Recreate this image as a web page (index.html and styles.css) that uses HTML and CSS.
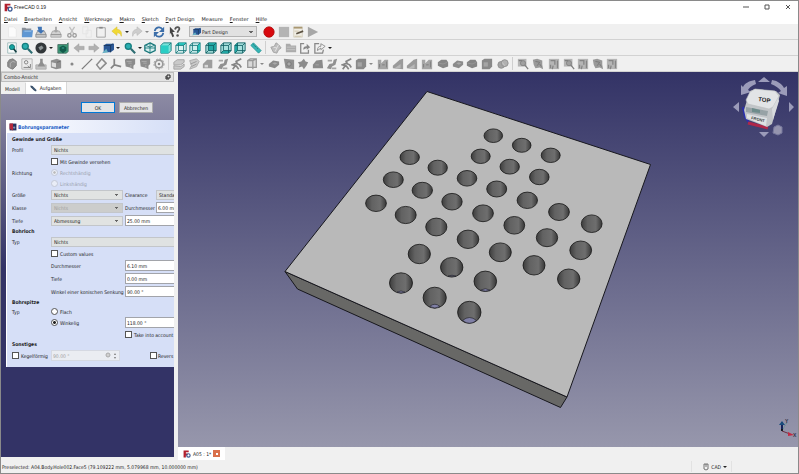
FILE: index.html
```
<!DOCTYPE html>
<html lang="de">
<head>
<meta charset="utf-8">
<title>FreeCAD 0.19</title>
<link rel="stylesheet" href="styles.css">
</head>
<body>
<svg class="defs" aria-hidden="true">
  <defs>
    <symbol id="logo" viewBox="0 0 14 14"><path d="M1 1h9v3H5v2h3v3H5v4H1z" fill="#b3202e"/><circle cx="9.500" cy="9.500" r="3" fill="none" stroke="#3d5a94" stroke-width="2"/></symbol>
    <symbol id="new" viewBox="0 0 14 14"><path d="M3 1h6l3 3v9H3z" fill="#fbfbfb" stroke="#e8e8e8"/></symbol>
    <symbol id="open" viewBox="0 0 14 14"><path d="M1 2h4l1 1h6v9H1z" fill="#8a9099"/><path d="M2 5h12l-1 8H1z" fill="#5f97d3"/><path d="M4 6h8" stroke="#a9cbee"/></symbol>
    <symbol id="save" viewBox="0 0 14 14"><path d="M3 6h8l2 4v3H1v-3z" fill="#c9cbcc" stroke="#8b8e91"/><path d="M1 10h12" stroke="#8b8e91"/><path d="M3 1h5v4h3L7 9 2 5h2z" fill="#3f74b5"/></symbol>
    <symbol id="tray" viewBox="0 0 14 14"><path d="M3 6h8l2 4v3H1v-3z" fill="#d0d0d0" stroke="#a5a5a5"/><path d="M1 10h12" stroke="#8b8b8b"/><path d="M6 1h2v4h2L7 8 4 5h2z" fill="#a5a5a5"/></symbol>
    <symbol id="cut" viewBox="0 0 14 14"><path d="M4 1l5 8M10 1L5 9" stroke="#c0c0c0" stroke-width="1.500"/><circle cx="4" cy="11" r="2" fill="none" stroke="#999" stroke-width="1.500"/><circle cx="10" cy="11" r="2" fill="none" stroke="#999" stroke-width="1.500"/></symbol>
    <symbol id="copy" viewBox="0 0 14 14"><path d="M2 1h6v8H2zM6 5h6v8H6z" fill="#f1f1f1" stroke="#e4e4e4"/></symbol>
    <symbol id="paste" viewBox="0 0 14 14"><path d="M2 2h10v11H2z" fill="#f0f0f0" stroke="#9c9c9c"/><path d="M5 1h4v2H5z" fill="#888"/></symbol>
    <symbol id="undo" viewBox="0 0 14 14"><path d="M7 1v3c4 0 6 3 5 8-1-3-2-4-5-4v3L1 6z" fill="#f1d934" stroke="#dcc23a" stroke-width=".7"/></symbol>
    <symbol id="redo" viewBox="0 0 14 14"><path d="M7 1v3c-4 0-6 3-5 8 1-3 2-4 5-4v3l6-5z" fill="#cdcdcd" stroke="#b9b9b9" stroke-width=".7"/></symbol>
    <symbol id="refresh" viewBox="0 0 14 14"><path d="M2 6c1-5 7-6 9-2M12 8c-1 5-7 6-9 2" fill="none" stroke="#3c6ea9" stroke-width="2"/><path d="M13 1v6H7zM1 13V7h6z" fill="#3c6ea9"/></symbol>
    <symbol id="help" viewBox="0 0 14 14"><path d="M1 1l6 6H4l2 5-2 1-2-5-1 2z" fill="#444"/><path d="M7 4c1-4 6-3 5 0-1 2-2 2-2 4" fill="none" stroke="#555" stroke-width="2"/><circle cx="10" cy="11" r="1.500" fill="#555"/></symbol>
    <symbol id="rec" viewBox="0 0 14 14"><circle cx="7" cy="7" r="6" fill="#d8090e" stroke="#b00a0c"/></symbol>
    <symbol id="stop" viewBox="0 0 14 14"><path d="M1 1h12v12H1z" fill="#b4b4b4"/></symbol>
    <symbol id="macro" viewBox="0 0 14 14"><path d="M2 1h10v12H2z" fill="#f0ede4" stroke="#d5cfc0"/><path d="M2 1h10v2H2z" fill="#a99872"/><path d="M5 9l8-3" stroke="#5a5142" stroke-width="2"/><path d="M3 6h5M3 12h8" stroke="#ccc2a8"/></symbol>
    <symbol id="play" viewBox="0 0 14 14"><path d="M1 1l12 6-12 6z" fill="#a7a7a7"/></symbol>
    <symbol id="fit" viewBox="0 0 14 14"><path d="M2 1h10v12H2z" fill="#f8fbfb" stroke="#9ab8b8"/><circle cx="7" cy="6" r="3" fill="#14a3a0" stroke="#126d6d"/><path d="M9 8l3 4" stroke="#143f43" stroke-width="2"/></symbol>
    <symbol id="zoom" viewBox="0 0 14 14"><circle cx="5" cy="5" r="3.500" fill="#2aaeb0" stroke="#157c7e" stroke-width="1.500"/><path d="M8 8l5 5" stroke="#2d6d72" stroke-width="2.500"/></symbol>
    <symbol id="style" viewBox="0 0 14 14"><circle cx="7" cy="7" r="6.500" fill="#32373a"/><path d="M4 6l4-2 2 3-4 3z" fill="#8d9597"/></symbol>
    <symbol id="bbox" viewBox="0 0 14 14"><path d="M1 3h10l2-2v10l-2 2H1z" fill="#3a9a78" stroke="#4a6d64"/><path d="M3 6l4-2 4 2v4l-4 3-4-3z" fill="#125b4b"/><path d="M5 7l2-1 2 1-2 1z" fill="#33a08d"/></symbol>
    <symbol id="back" viewBox="0 0 14 14"><path d="M1 7l6-5v3h6v4H7v3z" fill="#b0b0b0" stroke="#9b9b9b" stroke-width=".5"/></symbol>
    <symbol id="fwd" viewBox="0 0 14 14"><path d="M13 7L7 2v3H1v4h6v3z" fill="#b0b0b0" stroke="#9b9b9b" stroke-width=".5"/></symbol>
    <symbol id="link" viewBox="0 0 14 14"><path d="M2 4l3-2h9v7l-4 3H2z" fill="#2a5796"/><path d="M2 4h8v8M10 4l3-2" fill="none" stroke="#173558"/><path d="M0 13l5-5 2 4z" fill="#66b2c4"/></symbol>
    <symbol id="axo" viewBox="0 0 14 14"><path d="M7 1l6 3v6l-6 3-6-3V4z" fill="#d9f1f0" stroke="#19777a" stroke-width="1.500"/><path d="M7 1v12M1 7h12M2 4l5 2 5-2" stroke="#19777a" fill="none"/></symbol>
    <symbol id="c-front" viewBox="0 0 14 14"><path d="M1 4l3-3h9v9l-3 3H1z" fill="#79e3da" stroke="#16777a"/><path d="M1 4h9v9H1z" fill="#2acdc4"/><path d="M10 4l3-3" stroke="#16777a"/></symbol>
    <symbol id="c-top" viewBox="0 0 14 14"><path d="M1 4l3-3h9v9l-3 3H1z" fill="#dff2f2" stroke="#16777a"/><path d="M1 4l3-3h9l-3 3z" fill="#29c5be"/><path d="M1 4h9v9M10 4l3-3M4 1v9h9M4 10l-3 3" fill="none" stroke="#16777a"/></symbol>
    <symbol id="c-right" viewBox="0 0 14 14"><path d="M1 4l3-3h9v9l-3 3H1z" fill="#d0efee" stroke="#16777a"/><path d="M10 4l3-3v9l-3 3z" fill="#29c5be"/><path d="M1 4h9v9M10 4l3-3M4 1v9h9M4 10l-3 3" fill="none" stroke="#16777a"/></symbol>
    <symbol id="c-rear" viewBox="0 0 14 14"><path d="M1 4l3-3h9v9l-3 3H1z" fill="#a9dedc" stroke="#0e5f62"/><path d="M4 1h9v9H4z" fill="#22a8a5"/><path d="M1 4h9v9M10 4l3-3M4 1v9h9M4 10l-3 3" fill="none" stroke="#0e5f62"/></symbol>
    <symbol id="c-bottom" viewBox="0 0 14 14"><path d="M1 4l3-3h9v9l-3 3H1z" fill="#a9e2df" stroke="#0e5f62"/><path d="M1 13l3-3h9l-3 3z" fill="#22a8a5"/><path d="M1 4h9v9M10 4l3-3M4 1v9h9M4 10l-3 3" fill="none" stroke="#0e5f62"/></symbol>
    <symbol id="c-left" viewBox="0 0 14 14"><path d="M1 4l3-3h9v9l-3 3H1z" fill="#a9e2df" stroke="#0e5f62"/><path d="M1 4l3-3v9l-3 3z" fill="#22a8a5"/><path d="M1 4h9v9M10 4l3-3M4 1v9h9M4 10l-3 3" fill="none" stroke="#0e5f62"/></symbol>
    <symbol id="ruler" viewBox="0 0 14 14"><path d="M1 4l3-3 9 9-3 3z" fill="#35b5b5" stroke="#2a9494"/><path d="M4 3l1 1M6 5l1 1M8 7l1 1" stroke="#0d5c5c"/></symbol>
    <symbol id="part" viewBox="0 0 14 14"><path d="M1 6l4-1 2-4 3 2 3 4-3 2-2 4-4-1z" fill="#bebebe" stroke="#a0a0a0"/><path d="M4 6l4 1 2-4M8 7l-2 4" fill="none" stroke="#e6e6e6"/></symbol>
    <symbol id="folder" viewBox="0 0 14 14"><path d="M1 2h5l1 2h6v8H1z" fill="#ababab"/><path d="M2 6h10M2 9h10" stroke="#c8c8c8"/></symbol>
    <symbol id="export" viewBox="0 0 14 14"><path d="M6 2H2v11h9V9" fill="none" stroke="#888" stroke-width="1.500"/><path d="M5 9c0-3 1-4 4-4V2l4 4-4 3V7z" fill="#888"/></symbol>
    <symbol id="export2" viewBox="0 0 14 14"><path d="M6 2H1v11h9l1-4" fill="none" stroke="#888" stroke-width="1.500"/><path d="M4 10c0-3 1-5 4-5V2l5 3-5 4V7z" fill="none" stroke="#888"/></symbol>
    <symbol id="body" viewBox="0 0 14 14"><path d="M2 5l2-3 4-1 4 3v5l-4 4-3-1-3-2z" fill="#8c8c8c" stroke="#787878"/><path d="M5 6l3-2 3 1M5 6v5" stroke="#b8b8b8" fill="none"/></symbol>
    <symbol id="sketch" viewBox="0 0 14 14"><path d="M1 1h12v12H1z" fill="#ececec" stroke="#b0b0b0"/><circle cx="6" cy="5" r="2" fill="none" stroke="#777"/><path d="M3 11h8V7M8 9l3 3" fill="none" stroke="#777"/></symbol>
    <symbol id="edit" viewBox="0 0 14 14"><path d="M1 8h12v5H1z" fill="#c2c2c2" stroke="#aaa"/><path d="M6 1h3v4l3 5H3l3-5z" fill="#8f8f8f"/></symbol>
    <symbol id="map" viewBox="0 0 14 14"><path d="M1 3l7-2 5 2v9l-6 1-6-2z" fill="#8f8f8f"/><path d="M2 5l5 1v5l-5-1z" fill="#dedede"/><path d="M8 5l4-1" stroke="#666"/></symbol>
    <symbol id="point" viewBox="0 0 14 14"><circle cx="7" cy="7" r="1.800" fill="#888"/></symbol>
    <symbol id="line" viewBox="0 0 14 14"><path d="M1 13L13 1" stroke="#7c7c7c" stroke-width="1.500"/></symbol>
    <symbol id="plane" viewBox="0 0 14 14"><path d="M8 1l5 5-7 7-4-5z" fill="none" stroke="#8c8c8c" stroke-width="1.800"/></symbol>
    <symbol id="lcs" viewBox="0 0 14 14"><path d="M5 1v7l8 2M5 8l-4 4" fill="none" stroke="#858585" stroke-width="2"/></symbol>
    <symbol id="binder" viewBox="0 0 14 14"><path d="M1 2l2-1h10v6l-2 2v4l-4-2-5-1z" fill="#8c8c8c"/><path d="M3 4h6M5 6h4M8 8v3" stroke="#adadad"/></symbol>
    <symbol id="gear" viewBox="0 0 14 14"><circle cx="7" cy="7" r="4.500" fill="none" stroke="#999" stroke-width="2"/><circle cx="7" cy="7" r="6" fill="none" stroke="#999" stroke-dasharray="2 2"/><circle cx="7" cy="7" r="1.500" fill="#888"/></symbol>
    <symbol id="pad" viewBox="0 0 14 14"><path d="M1 5l4-3h8v3L9 8H1zM1 9l8 1 4-3v3l-4 3H1z" fill="#c9c9c9" stroke="#a0a0a0"/></symbol>
    <symbol id="revolve" viewBox="0 0 14 14"><path d="M2 3l8-2 3 3-3 6-8 3 2-4z" fill="#cacaca" stroke="#a9a9a9"/><path d="M3 7l7-3M4 10l6-3" stroke="#959595"/></symbol>
    <symbol id="loft" viewBox="0 0 14 14"><path d="M1 7l5-5h6v10H1z" fill="#9d9d9d"/><path d="M3 8h4v3H3z" fill="#d8d8d8"/></symbol>
    <symbol id="loft2" viewBox="0 0 14 14"><path d="M1 8l4-5 7-1 1 10H1z" fill="#8a8a8a"/><path d="M4 8h4" stroke="#aaa"/></symbol>
    <symbol id="sweep" viewBox="0 0 14 14"><path d="M1 12l3-5 4-1 1-4 4-1-2 7-4 2-1 3z" fill="#909090"/><path d="M2 3h5M7 12h5" stroke="#a5a5a5" stroke-width="2"/></symbol>
    <symbol id="helix" viewBox="0 0 14 14"><path d="M2 13l3-4-3-1 5-2-1-2 6-3M6 6l4 2 2 3M6 9l3 4" fill="none" stroke="#858585" stroke-width="2"/></symbol>
    <symbol id="prim" viewBox="0 0 14 14"><path d="M2 3l3-2h7v10H2zM2 3h6v10M8 3l4-2" fill="#d9d9d9" stroke="#989898" stroke-width="1.500"/></symbol>
    <symbol id="pocket" viewBox="0 0 14 14"><path d="M1 7l5-4 7 1v4l-5 4-7-2z" fill="#8b8b8b"/><path d="M5 6l3-1 3 1-3 2z" fill="#a9a9a9"/></symbol>
    <symbol id="hole" viewBox="0 0 14 14"><path d="M1 1l12 1v11L3 12z" fill="#909090"/><circle cx="7" cy="7" r="2.500" fill="#aaa" stroke="#757575"/></symbol>
    <symbol id="groove" viewBox="0 0 14 14"><path d="M1 5l4-1 3-3 2 3 3 1-2 4-3 4-2-3-4 1 1-3z" fill="#8c8c8c"/></symbol>
    <symbol id="box" viewBox="0 0 14 14"><path d="M1 3l3-2h9v9l-3 3H1z" fill="#898989"/><path d="M3 5h5v5H3z" fill="#a5a5a5"/></symbol>
    <symbol id="wedge" viewBox="0 0 14 14"><path d="M1 12V9l8-7 4-1v12z" fill="#9a9a9a"/><path d="M3 12l7-5v5z" fill="#b8b8b8"/></symbol>
    <symbol id="pattern" viewBox="0 0 14 14"><path d="M1 2h4v4l4-4h4v11H1z" fill="#a5a5a5"/><path d="M3 7v4M6 8h3M11 4v7" stroke="#7a7a7a"/></symbol>
    <symbol id="fillet" viewBox="0 0 14 14"><path d="M1 5l4-3 6 0 2 3v5l-6 2-6-3z" fill="#858585"/><path d="M2 6l5 1 5-2" stroke="#989898" fill="none"/></symbol>
    <symbol id="bool" viewBox="0 0 14 14"><circle cx="5" cy="8" r="4" fill="#a4a4a4" stroke="#8d8d8d"/><circle cx="9" cy="6" r="4" fill="#b0b0b0" stroke="#8d8d8d"/><path d="M6 5l3 4" stroke="#ccc"/></symbol>
    <symbol id="meas" viewBox="0 0 14 14"><path d="M1 1h10v9H1z" fill="#b5b5b5"/><circle cx="7" cy="6" r="3" fill="#a0a0a0" stroke="#838383"/><path d="M9 8l4 5M2 3h4" stroke="#808080" stroke-width="1.500"/></symbol>
    <symbol id="meas2" viewBox="0 0 14 14"><path d="M1 2l5-1 6 2v5l1 5-4-2-5 1-2-4z" fill="#999"/><path d="M4 4l5 1-3 4M9 7l2 3" stroke="#747474" fill="none"/></symbol>
    <symbol id="meas3" viewBox="0 0 14 14"><path d="M1 1h12v12H1z" fill="#b5b5b5"/><path d="M3 3h5v5M3 12V8M6 9l-1 4M11 3v9" stroke="#858585" fill="none" stroke-width="1.500"/></symbol>
    <symbol id="pencil" viewBox="0 0 14 14"><path d="M1 1l4 1 8 8-1 3-4-2-7-7z" fill="#31475f"/><path d="M4 3l8 8" stroke="#6d8bb0"/></symbol>
    <linearGradient id="bore"><stop offset="0" stop-color="#3d3d3d"/><stop offset=".3" stop-color="#626262"/><stop offset=".7" stop-color="#6e6e6e"/><stop offset="1" stop-color="#373737"/></linearGradient>
  </defs>
</svg>

<div class="window">
  <header class="titlebar">
    <svg class="icon"><use href="#logo"/></svg>
    <h1>FreeCAD 0.19</h1>
    <div class="winbtns">
      <button aria-label="Minimieren"><svg viewBox="0 0 6 6"><path d="M0 3h6"/></svg></button>
      <button aria-label="Maximieren"><svg viewBox="0 0 6 6"><path d="M1 1h4v4H1z"/></svg></button>
      <button aria-label="Schließen"><svg viewBox="0 0 6 6"><path d="M1 1l4 4M5 1L1 5"/></svg></button>
    </div>
  </header>
  <nav class="menubar">
    <button><u>D</u>atei</button><button><u>B</u>earbeiten</button><button><u>A</u>nsicht</button><button><u>W</u>erkzeuge</button><button><u>M</u>akro</button><button><u>S</u>ketch</button><button><u>P</u>art Design</button><button>Measure</button><button><u>F</u>enster</button><button><u>H</u>ilfe</button>
  </nav>

  <div class="toolbar">
    <div class="group n4"><button aria-label="Neu"><svg><use href="#new"/></svg></button><button aria-label="Öffnen"><svg><use href="#open"/></svg></button><button aria-label="Speichern"><svg><use href="#save"/></svg></button><button aria-label="Drucken"><svg><use href="#tray"/></svg></button></div>
    <div class="group n3"><button aria-label="Ausschneiden"><svg><use href="#cut"/></svg></button><button aria-label="Kopieren"><svg><use href="#copy"/></svg></button><button aria-label="Einfügen"><svg><use href="#paste"/></svg></button></div>
    <div class="group"><button aria-label="Rückgängig"><svg><use href="#undo"/></svg></button><button class="drop" aria-label="Rückgängig-Liste"></button><button aria-label="Wiederholen"><svg><use href="#redo"/></svg></button><button class="drop off" aria-label="Wiederholen-Liste"></button></div>
    <div class="group"><button aria-label="Aktualisieren"><svg><use href="#refresh"/></svg></button></div>
    <div class="group"><button aria-label="Direkthilfe"><svg><use href="#help"/></svg></button></div>
    <div class="workbench"><svg class="icon"><use href="#link"/></svg><select aria-label="Arbeitsbereich"><option>Part Design</option></select></div>
    <div class="group n4"><button aria-label="Aufzeichnen"><svg><use href="#rec"/></svg></button><button aria-label="Stopp"><svg><use href="#stop"/></svg></button><button aria-label="Makros"><svg><use href="#macro"/></svg></button><button aria-label="Ausführen"><svg><use href="#play"/></svg></button></div>
  </div>

  <div class="toolbar">
    <div class="group n3"><button aria-label="Alles einpassen"><svg><use href="#fit"/></svg></button><button aria-label="Auswahl einpassen"><svg><use href="#zoom"/></svg></button><button aria-label="Darstellung"><svg><use href="#style"/></svg></button></div><button class="drop joined" aria-label="Darstellungen"></button>
    <div class="group"><button aria-label="Begrenzungsrahmen"><svg><use href="#bbox"/></svg></button></div>
    <div class="group n3"><button aria-label="Zurück"><svg><use href="#back"/></svg></button><button aria-label="Vorwärts"><svg><use href="#fwd"/></svg></button><button aria-label="Verknüpfung"><svg><use href="#link"/></svg></button></div><button class="drop joined" aria-label="Verknüpfungen"></button>
    <div class="group"><button aria-label="Zoom"><svg><use href="#zoom"/></svg></button><button class="drop" aria-label="Zoomstufen"></button><button aria-label="Isometrisch"><svg><use href="#axo"/></svg></button></div>
    <div class="group n3"><button aria-label="Vorne"><svg><use href="#c-front"/></svg></button><button aria-label="Oben"><svg><use href="#c-top"/></svg></button><button aria-label="Rechts"><svg><use href="#c-right"/></svg></button></div>
    <div class="group n3"><button aria-label="Hinten"><svg><use href="#c-rear"/></svg></button><button aria-label="Unten"><svg><use href="#c-bottom"/></svg></button><button aria-label="Links"><svg><use href="#c-left"/></svg></button></div>
    <div class="group"><button aria-label="Abstand messen"><svg><use href="#ruler"/></svg></button></div>
    <span class="sep"></span>
    <div class="group n4"><button aria-label="Teil"><svg><use href="#part"/></svg></button><button aria-label="Gruppe"><svg><use href="#folder"/></svg></button><button aria-label="Link erstellen"><svg><use href="#export"/></svg></button><button aria-label="Link-Aktionen"><svg><use href="#export2"/></svg></button></div><button class="drop joined" aria-label="Weitere Link-Aktionen"></button>
  </div>

  <div class="toolbar">
    <div class="group n4"><button aria-label="Körper"><svg><use href="#body"/></svg></button><button aria-label="Skizze"><svg><use href="#sketch"/></svg></button><button aria-label="Skizze bearbeiten"><svg><use href="#edit"/></svg></button><button aria-label="Skizze zuordnen"><svg><use href="#map"/></svg></button></div>
    <div class="group n7"><button aria-label="Punkt"><svg><use href="#point"/></svg></button><button aria-label="Linie"><svg><use href="#line"/></svg></button><button aria-label="Ebene"><svg><use href="#plane"/></svg></button><button aria-label="Koordinatensystem"><svg><use href="#lcs"/></svg></button><button aria-label="Formbinder"><svg><use href="#binder"/></svg></button><button aria-label="Unterformbinder"><svg><use href="#binder"/></svg></button><button aria-label="Zahnrad"><svg><use href="#gear"/></svg></button></div>
    <span class="sep"></span>
    <div class="group n6"><button aria-label="Aufpolsterung"><svg><use href="#pad"/></svg></button><button aria-label="Drehkörper"><svg><use href="#revolve"/></svg></button><button aria-label="Ausformung"><svg><use href="#loft"/></svg></button><button aria-label="Rohr"><svg><use href="#sweep"/></svg></button><button aria-label="Wendel"><svg><use href="#helix"/></svg></button><button aria-label="Grundkörper"><svg><use href="#prim"/></svg></button></div><button class="drop joined off" aria-label="Grundkörperliste"></button>
    <div class="group n7"><button aria-label="Tasche"><svg><use href="#pocket"/></svg></button><button aria-label="Bohrung"><svg><use href="#hole"/></svg></button><button aria-label="Nut"><svg><use href="#groove"/></svg></button><button aria-label="Abzug Ausformung"><svg><use href="#loft2"/></svg></button><button aria-label="Abzug Rohr"><svg><use href="#sweep"/></svg></button><button aria-label="Abzug Wendel"><svg><use href="#helix"/></svg></button><button aria-label="Abzug Grundkörper"><svg><use href="#box"/></svg></button></div><button class="drop joined off" aria-label="Abzugsliste"></button>
    <div class="group n4"><button aria-label="Spiegeln"><svg><use href="#pattern"/></svg></button><button aria-label="Lineares Muster"><svg><use href="#wedge"/></svg></button><button aria-label="Polares Muster"><svg><use href="#wedge"/></svg></button><button aria-label="Mehrfachtransformation"><svg><use href="#pattern"/></svg></button></div>
    <div class="group n4"><button aria-label="Verrundung"><svg><use href="#fillet"/></svg></button><button aria-label="Fase"><svg><use href="#pocket"/></svg></button><button aria-label="Formschräge"><svg><use href="#fillet"/></svg></button><button aria-label="Dicke"><svg><use href="#box"/></svg></button></div>
    <div class="group"><button aria-label="Boolesche Operation"><svg><use href="#bool"/></svg></button></div>
    <span class="sep"></span>
    <div class="group n2"><button aria-label="Linear messen"><svg><use href="#meas"/></svg></button><button aria-label="Winkel messen"><svg><use href="#meas2"/></svg></button></div>
    <div class="group n5"><button aria-label="Messung auffrischen"><svg><use href="#meas3"/></svg></button><button aria-label="Messungen löschen"><svg><use href="#meas"/></svg></button><button aria-label="Messungen umschalten"><svg><use href="#meas3"/></svg></button><button aria-label="3D umschalten"><svg><use href="#meas2"/></svg></button><button aria-label="Delta umschalten"><svg><use href="#meas3"/></svg></button></div>
  </div>

  <main class="work">
    <aside class="dock">
      <div class="dock-title"><span>Combo-Ansicht</span><button aria-label="Abdocken"><svg viewBox="0 0 6 6"><path d="M2 1h3v3H2zM1 2v3h3" /></svg></button></div>
      <div class="tabs"><button>Modell</button><button class="active"><svg class="icon"><use href="#pencil"/></svg>Aufgaben</button></div>
      <div class="tasks">
        <div class="actions"><button class="ok">OK</button><button>Abbrechen</button></div>
        <section class="panel">
          <h2><svg class="icon" viewBox="0 0 14 14"><path d="M1 1h12v12H1z" fill="#28335e"/><path d="M1 1h6v12l-6-3z" fill="#b3283b"/><circle cx="9" cy="8" r="2" fill="#8490b4"/></svg>Bohrungsparameter</h2>
          <form class="form">
            <h3>Gewinde und Größe</h3>
            <div class="row r12"><label for="profil">Profil</label><select id="profil" class="span flat"><option>Nichts</option></select></div>
            <div class="row"><label class="check c2"><input type="checkbox">Mit Gewinde versehen</label></div>
            <div class="row"><span>Richtung</span><label class="check dis"><input type="radio" name="dir" disabled checked>Rechtshändig</label></div>
            <div class="row"><label class="check c2 dis"><input type="radio" name="dir" disabled>Linkshändig</label></div>
            <div class="row r12"><label for="gr">Größe</label><select id="gr"><option>Nichts</option></select><label for="cl">Clearance</label><select id="cl" class="flat"><option>Standard</option></select></div>
            <div class="row r13"><label for="kl">Klasse</label><select id="kl" disabled><option>Nichts</option></select><label for="dm">Durchmesser</label><input id="dm" value="6.00 mm"></div>
            <div class="row r13"><label for="ti">Tiefe</label><select id="ti"><option>Abmessung</option></select><input class="wide" aria-label="Tiefe" value="25.00 mm"></div>
            <h3>Bohrloch</h3>
            <div class="row r12"><label for="ty">Typ</label><select id="ty" class="span flat"><option>Nichts</option></select></div>
            <div class="row"><label class="check c2"><input type="checkbox">Custom values</label></div>
            <div class="row r13"><label class="c2" for="d2">Durchmesser</label><input id="d2" class="wide" value="6.10 mm"></div>
            <div class="row r13"><label class="c2" for="t2">Tiefe</label><input id="t2" class="wide" value="0.00 mm"></div>
            <div class="row r13"><label class="c2" for="w2">Winkel einer konischen Senkung</label><input id="w2" class="wide" value="90.00 °"></div>
            <h3>Bohrspitze</h3>
            <div class="row r9"><span>Typ</span><label class="check"><input type="radio" name="tip">Flach</label></div>
            <div class="row r13"><label class="check c2"><input type="radio" name="tip" checked>Winkelig</label><input class="wide" aria-label="Spitzenwinkel" value="118.00 °"></div>
            <div class="row"><label class="check c3"><input type="checkbox">Take into account</label></div>
            <h3>Sonstiges</h3>
            <div class="row r13"><label class="check"><input type="checkbox">Kegelförmig</label><span class="spin"><input aria-label="Kegelwinkel" value="90.00 °" disabled><svg viewBox="0 0 14 8"><circle cx="3" cy="3" r="2" fill="#d0d0d0" stroke="#aaa"/><path d="M9 3l1-2 1 2zM9 5l1 2 1-2z" fill="#777"/></svg></span><label class="check rev"><input type="checkbox">Revers</label></div>
          </form>
        </section>
      </div>
    </aside>
    <section class="mdi">
      <div class="view">
        <svg class="scene" viewBox="178 72 620 375" preserveAspectRatio="xMidYMid slice" role="img" aria-label="Platte mit Bohrungen">
          <g stroke="#17171d" stroke-width="1" stroke-linejoin="round">
            <path d="M285 271.500L567 397l-6.500 10.500L297.500 289z" fill="#686866"/>
            <path d="M427 91.500L650.500 164.500 567 397 285 271.500z" fill="#b9b9b9"/>
          </g>
          <g fill="url(#bore)" stroke="#151515" stroke-width=".8">
            <ellipse cx="493.300" cy="135.700" rx="9.300" ry="6.800"/><ellipse cx="521.700" cy="145.300" rx="9.300" ry="7"/><ellipse cx="550.700" cy="155.300" rx="9.500" ry="7.200"/>
            <ellipse cx="480.700" cy="156.300" rx="9.500" ry="7.200"/><ellipse cx="509.700" cy="166.700" rx="9.700" ry="7.400"/><ellipse cx="539.300" cy="177" rx="9.800" ry="7.700"/>
            <ellipse cx="409.700" cy="157.300" rx="9.700" ry="7.200"/><ellipse cx="437.700" cy="167.700" rx="9.700" ry="7.500"/><ellipse cx="467" cy="178.300" rx="9.800" ry="7.800"/><ellipse cx="496.700" cy="189" rx="10" ry="8"/><ellipse cx="527.300" cy="200.300" rx="10.200" ry="8.200"/><ellipse cx="559" cy="212" rx="10.400" ry="8.500"/><ellipse cx="591.700" cy="223.700" rx="10.400" ry="8.800"/>
            <ellipse cx="393.300" cy="179.700" rx="10" ry="7.800"/><ellipse cx="422.300" cy="190.300" rx="10.200" ry="8"/><ellipse cx="452" cy="201.700" rx="10.200" ry="8.300"/><ellipse cx="483" cy="213.300" rx="10.400" ry="8.400"/><ellipse cx="514.300" cy="225.300" rx="10.400" ry="8.800"/><ellipse cx="547" cy="237.700" rx="10.700" ry="9"/><ellipse cx="580.700" cy="250.300" rx="10.900" ry="9.300"/>
            <ellipse cx="376" cy="203.300" rx="10.400" ry="8.200"/><ellipse cx="405.700" cy="215" rx="10.500" ry="8.600"/><ellipse cx="436.300" cy="227" rx="10.600" ry="8.900"/><ellipse cx="468" cy="239.300" rx="10.800" ry="9.200"/><ellipse cx="500.300" cy="252.300" rx="11" ry="9.400"/><ellipse cx="534" cy="265.300" rx="11" ry="9.700"/><ellipse cx="568.700" cy="279" rx="11.200" ry="10"/>
            <ellipse cx="419.300" cy="254" rx="11.100" ry="9.700"/><ellipse cx="451.700" cy="267.300" rx="11.200" ry="9.800"/><ellipse cx="485.300" cy="281.300" rx="11.300" ry="10.200"/>
            <ellipse cx="401" cy="283" rx="11.500" ry="10.200"/><ellipse cx="434.700" cy="297.700" rx="11.600" ry="10.500"/><ellipse cx="469.300" cy="312.300" rx="11.700" ry="11"/>
          </g>
          <g fill="#8080a6" stroke="#1b1b20" stroke-width=".6">
            <path d="M462.500 320.500q7-6 14 0q-7 5.500-14 0z"/><path d="M429.500 306.500q5.500-4.500 10.500 0q-5 3-10.500 0z"/><path d="M480.500 290.200q5-3 9.500 0q-4.500 2-9.500 0z"/><path d="M397 292.200q4-2.500 8 0q-4 1.500-8 0z"/><path d="M448 276.200q4-2 8 0z"/>
          </g>
        </svg>
        <svg class="navcube" viewBox="0 0 66 64" role="img" aria-label="Navigationswürfel">
          <g fill="#9b9bb9">
            <path d="M32 3l6 5H26zM32 63l5-5H27zM1 33l6-5v10zM62 33l-5-5v10z"/>
            <path d="M23 6l1 4c-5 2-7 4-8 6l3 2-10 3 0-10 2 2c2-4 6-6 12-7zM40 6l-1 4c5 2 8 4 10 7l-3 2 9 3 0-10-3 2c-2-4-6-7-12-8z"/>
          </g>
          <path d="M11 33l2 10 6 8" fill="none" stroke="#292fae" stroke-width="2"/>
          <path d="M16 49l20 5" stroke="#b02749" stroke-width="3"/>
          <path d="M18 17l5-2 21 2 4 4-8 29-5 3-21-8-2-9z" fill="#c2c5c8"/>
          <path d="M18 18l5-3 20 2 4 5-6 11-4 2-21-5-2-4z" fill="#e2e4e6" stroke="#babdc0" stroke-width=".6"/>
          <path d="M14 33l22 4-1 5-21-4z" fill="#97a2a6"/><path d="M20 34l8 2v3l-8-1z" fill="#6e8c8b"/>
          <path d="M15 40l20 4-1 8-19-8z" fill="#dfe2e4"/>
          <path d="M40 35l6-11 1 3-6 19z" fill="#d8dbde"/>
          <text x="26" y="27" class="face" transform="rotate(8 26 27)">TOP</text>
          <text x="19" y="45" class="side" transform="rotate(14 19 45)">FRONT</text>
          <path d="M42 53l4-2 4 2v6l-4 2-5-2z" fill="#9594ae" stroke="#77789d"/>
        </svg>
        <svg class="axis" viewBox="0 0 20 20" role="img" aria-label="Achsenkreuz">
          <path d="M5 13V4" stroke="#16245c" stroke-width="2"/><path d="M2 7l3-4 3 4z" fill="#184b7b"/><path d="M5 13l5-9" stroke="#4e8e86" stroke-dasharray="1 1"/><path d="M5 13l8 3" stroke="#6c3243"/><path d="M11 14l6 3-6 1z" fill="#c22a43"/><circle cx="5" cy="12" r="1" fill="#111"/>
          <text x="8" y="5">Y</text><text x="16" y="19">X</text>
        </svg>
      </div>
      <div class="mdi-tabs"><div class="doc"><svg class="icon"><use href="#logo"/></svg><span>A05 : 1*</span><button aria-label="Dokument schließen"><svg viewBox="0 0 6 6"><path d="M2 2l2 2M4 2L2 4" stroke="#fff"/></svg></button></div></div>
    </section>
  </main>
  <footer class="status"><span>Preselected: A04.Body.Hole002.Face5 (79.109222 mm, 5.079968 mm, 10.000000 mm)</span><button class="nav"><svg viewBox="0 0 6 8"><path d="M1 1h4v5q-2 2-4 0zM3 1v3" fill="none" stroke="#555" stroke-width=".8"/></svg>CAD<i class="caret"></i></button></footer>
</div>
</body>
</html>
```
FILE: styles.css
```
* { box-sizing: border-box; }
html, body { height: 100%; }
body {
  margin: 0;
  font: 5px/8px "DejaVu Sans Condensed", "DejaVu Sans", sans-serif;
  color: #1c1c1c;
}
button, select, input { font: inherit; color: inherit; margin: 0; padding: 0; border: 0; background: none; border-radius: 0; }
button { display: flex; align-items: center; justify-content: center; }
h1, h2, h3 { margin: 0; font-size: 5px; }
.defs { position: absolute; width: 0; height: 0; }
.icon { width: 9px; height: 9px; flex: none; }

.window {
  height: 100vh;
  display: flex;
  flex-direction: column;
  background: #f0f0f0;
  border: 1px solid #8a8a8a;
}
.titlebar { display: flex; align-items: center; height: 12px; padding-left: 3px; gap: 1px; background: #fff; flex: none; }
.titlebar h1 { font: 5px/8px "Liberation Sans", sans-serif; }
.winbtns { margin-left: auto; display: flex; gap: 15px; padding-right: 7px; }
.winbtns svg { width: 6px; height: 6px; fill: none; stroke: #555; stroke-width: 1; }
.menubar { display: flex; gap: 7px; height: 11px; padding-left: 3px; background: #fff; align-items: center; flex: none; font-family: "DejaVu Sans", sans-serif; }

.toolbar { display: flex; align-items: center; gap: 2px; height: 16px; padding-left: 4px; border-bottom: 1px solid #d2d2d2; flex: none; overflow: hidden; }
.group { display: flex; justify-content: space-between; flex: none; }
.n2 { width: 29px; }
.n3 { width: 43px; }
.n4 { width: 58px; }
.n5 { width: 72px; }
.n6 { width: 87px; }
.n7 { width: 101px; }
.group button { width: 14px; height: 14px; }
.group svg { width: 12px; height: 12px; }
.group .drop, .drop { width: 6px; height: 14px; flex: none; }
.drop::after, .caret { content: ""; width: 0; border: 2px solid transparent; border-top-color: #222; border-bottom: 0; }
.drop.off::after { border-top-color: #888; }
.drop.joined { margin-left: -2px; }
.sep { width: 2px; height: 13px; border-left: 1px solid #cfcfcf; flex: none; }
.workbench { display: flex; align-items: center; width: 68px; height: 11px; margin: 0 3px 0 5px; padding-left: 2px; gap: 1px; background: #e1e1e1; border: 1px solid #b4b4b4; flex: none; }

select {
  appearance: none;
  height: 10px;
  min-width: 0;
  padding: 0 8px 0 2px;
  background: linear-gradient(45deg, transparent 50%, #666 50%) right 5px center / 2px 2px no-repeat, linear-gradient(-45deg, transparent 50%, #666 50%) right 3px center / 2px 2px no-repeat, #e1e3e2;
  border: 1px solid #c3c6ca;
}
.workbench select { flex: 1; border: 0; height: 9px; background-color: transparent; padding-left: 0; }

.work { flex: 1; display: flex; min-height: 0; }
.dock { width: 173px; margin-right: 4px; display: flex; flex-direction: column; flex: none; overflow: hidden; }
.dock-title { display: flex; align-items: center; justify-content: space-between; height: 10px; padding: 0 2px; background: #e2e2e2; border: 1px solid #bdbdbd; flex: none; }
.dock-title svg { width: 6px; height: 6px; fill: none; stroke: #222; stroke-width: 1; }
.tabs { display: flex; align-items: flex-end; height: 12px; flex: none; }
.tabs button { height: 11px; padding: 0 5px 0 4px; gap: 3px; border-right: 1px solid #d8d8d8; }
.tabs .active { background: #fff; height: 12px; }
.tabs .icon { width: 7px; height: 7px; }
.tasks { flex: 1; min-height: 0; padding-left: 5px; margin-bottom: 3px; background: linear-gradient(#8d8ba4, #333366 48%); overflow: hidden; }
.actions { display: flex; justify-content: flex-end; gap: 4px; padding: 8px 21px 7px 0; }
.actions button { width: 34px; height: 11px; background: #e4e4e6; border: 1px solid #adadad; }
.actions .ok { border: 1px solid #0078d7; }
.panel { background: #d6dff7; border-left: 1px solid #fff; overflow: hidden; padding-bottom: 5px; }
.panel h2 { display: flex; align-items: center; gap: 1px; height: 13px; padding-left: 2px; background: linear-gradient(90deg, #fff, #d6dff7); color: #215dc6; }
.panel h2 .icon { width: 8px; height: 8px; }
.form { padding: 2px 0 0 5px; overflow: hidden; }
.form h3 { line-height: 9px; }
.row { display: grid; grid-template-columns: 39px 72px 31px 48px; column-gap: 0; align-items: center; height: 11px; white-space: nowrap; }
.row > :nth-child(n+3) { margin-left: 2px; }
.r9 { height: 9px; }
.r12 { height: 12px; }
.r13 { height: 13px; }
.c2 { grid-column: 2; }
.c3 { grid-column: 3; margin-left: 2px; }
.span { grid-column: 2 / span 3; }
.wide { grid-column: 3 / span 2; margin-left: 2px; }
.row .wide { margin-left: 2px; }
.flat { background: #dfe2e2; }
.form input:not([type]) { height: 11px; min-width: 0; padding: 0 1px; background: #fff; border: 1px solid #a2a4aa; }
.form select:disabled { color: #a0a0a0; background-color: #cccdcc; opacity: 1; }
.check { display: flex; align-items: center; gap: 2px; }
.check input { appearance: none; width: 7px; height: 7px; flex: none; background: #fff; border: 1px solid #555; }
.check input[type="radio"] { border-radius: 50%; }
.check input:checked { background: radial-gradient(#222 0 35%, #fff 45%); }
.check.dis { color: #9a9fae; }
.check.dis input { border-color: #c4c9d6; background: #e9edf7; }
.check.dis input:checked { background: radial-gradient(#bbb 0 25%, #e9edf7 45%); }
.form .spin { display: flex; align-items: center; width: 69px; height: 11px; background: #eaedf2; border: 1px solid #d5d9e2; }
.form .spin input:not([type]) { flex: 1; border: 0; background: none; color: #a0a0a0; height: 9px; }
.spin svg { width: 14px; height: 8px; flex: none; }
.row .rev { grid-column: 3 / span 2; margin-left: 27px; gap: 1px; }

.mdi { flex: 1; display: flex; flex-direction: column; min-width: 0; }
.view { flex: 1; min-height: 0; position: relative; background: linear-gradient(#333366, #9797ac); overflow: hidden; }
.scene { display: block; width: 100%; height: 100%; }
.navcube { position: absolute; top: 2px; right: 0; width: 66px; height: 64px; }
.navcube .face { font: bold 6px "Liberation Sans", sans-serif; fill: #222; }
.navcube .side { font: bold 4px "Liberation Sans", sans-serif; fill: #333; }
.axis { position: absolute; right: 1px; bottom: 9px; width: 20px; height: 20px; }
.axis text { font: bold 5px "Liberation Sans", sans-serif; fill: #33334a; }
.mdi-tabs { display: flex; height: 13px; flex: none; }
.doc { display: flex; align-items: center; gap: 2px; padding: 0 5px; background: #fff; }
.doc .icon { width: 8px; height: 8px; }
.doc button { width: 7px; height: 7px; background: #d9704c; }
.doc button svg { width: 6px; height: 6px; }
.status { display: flex; align-items: center; justify-content: space-between; height: 13px; padding-left: 1px; flex: none; }
.nav { gap: 2px; height: 11px; padding: 0 4px 0 11px; margin-right: 66px; border: 1px solid #e2e2e2; border-width: 0 1px; }
.nav svg { width: 6px; height: 8px; }
```
